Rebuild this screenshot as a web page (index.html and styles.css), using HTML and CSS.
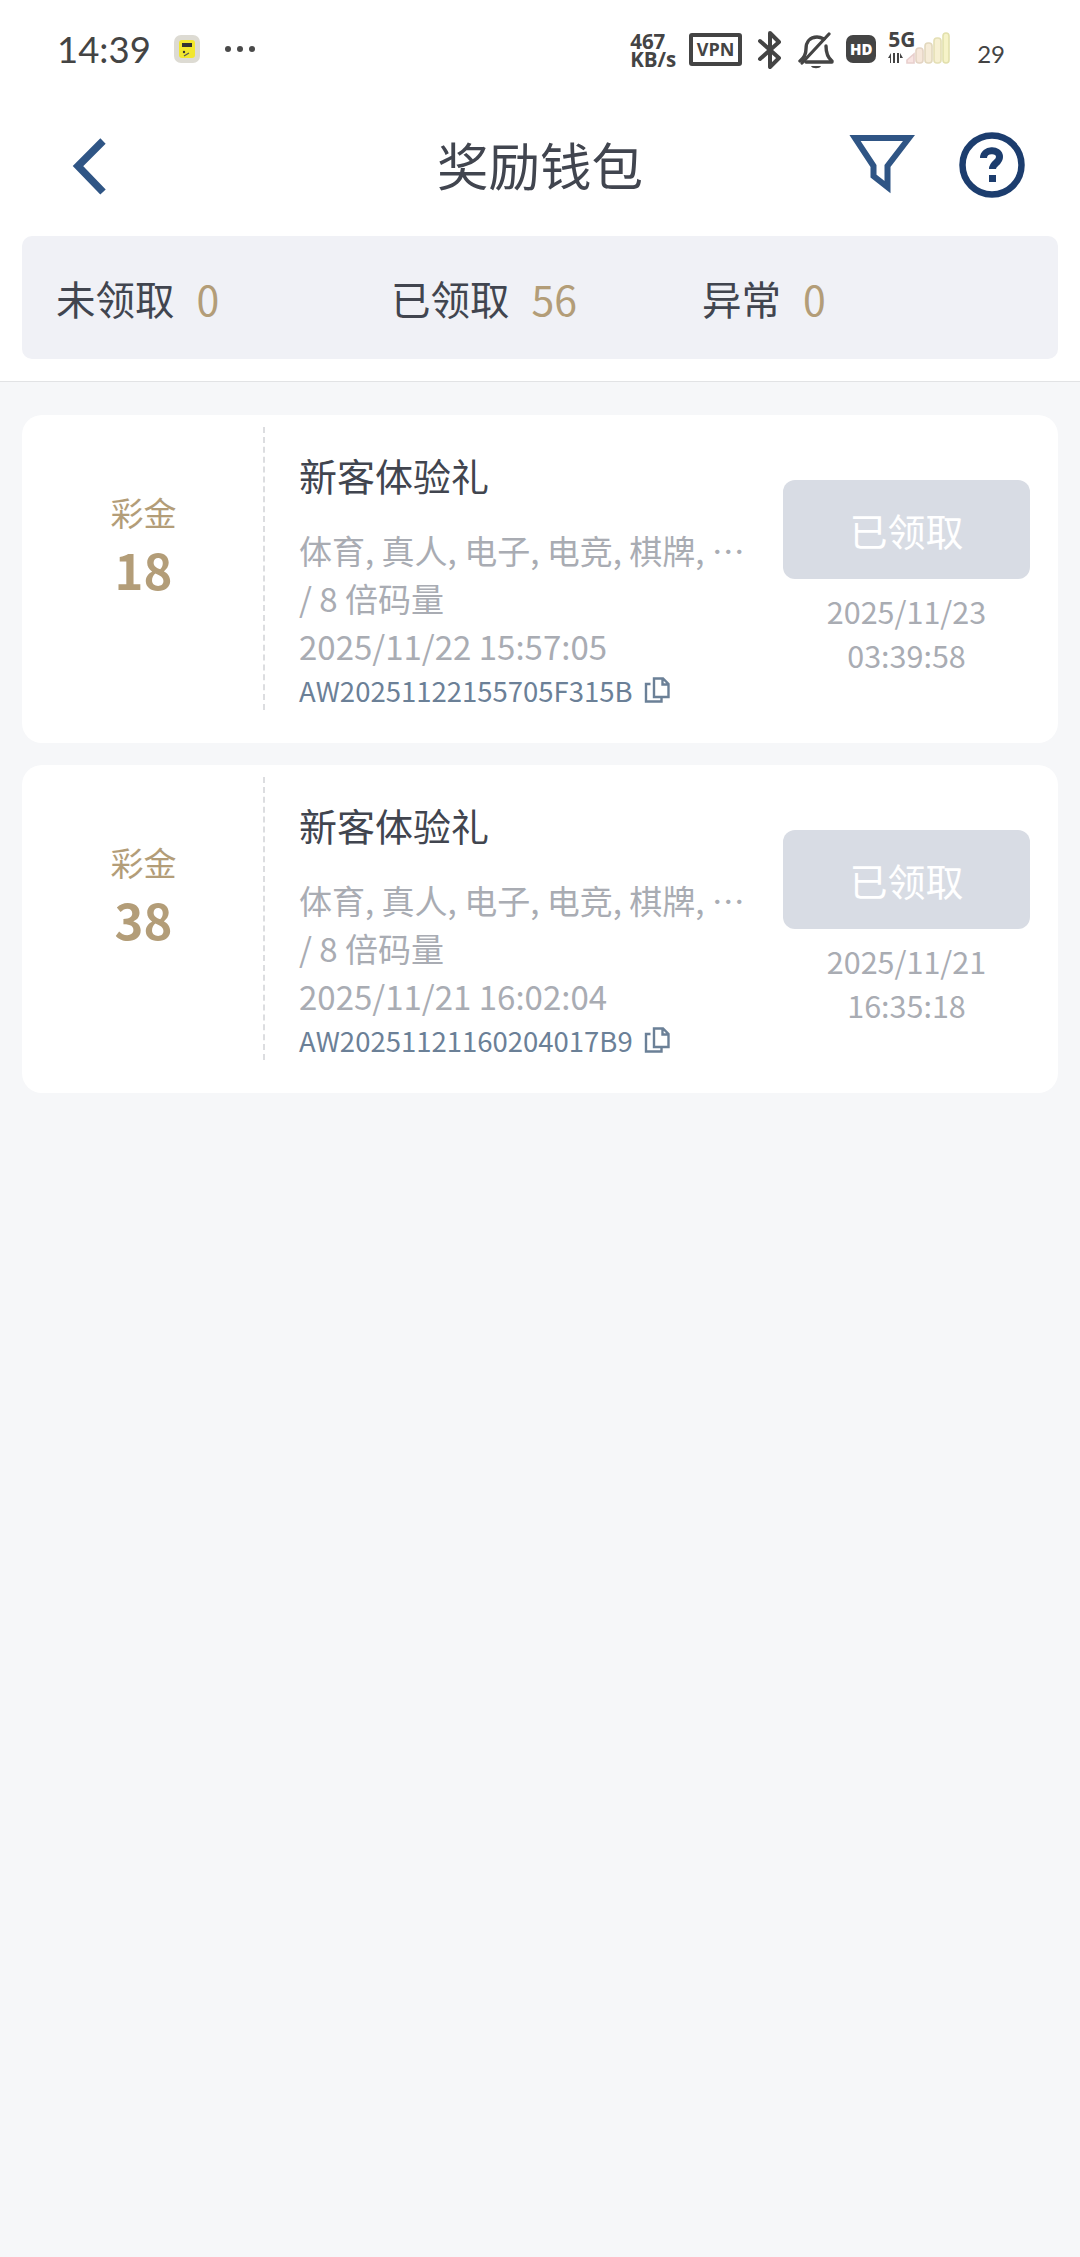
FILE: index.html
```html
<!DOCTYPE html>
<html lang="zh-CN">
<head>
<meta charset="utf-8">
<title>奖励钱包</title>
<link rel="stylesheet" href="styles.css">
</head>
<body>
<div class="top">
  <div class="status">
    <div class="status-left">
      <span class="clock">14:39</span>
      <svg class="app-icon" width="26" height="28" viewBox="0 0 26 28"><rect x="0" y="0" width="26" height="28" rx="7" fill="#dddbd3"/><rect x="5" y="5" width="16" height="18" rx="3" fill="#f2e72e"/><rect x="8" y="8" width="10" height="4" fill="#333"/><circle cx="10" cy="17" r="1.200" fill="#333"/><path d="M10 21l5-3" stroke="#555" stroke-width="1.200"/></svg>
      <svg class="dots" width="32" height="8" viewBox="0 0 32 8"><circle cx="4" cy="4" r="3" fill="#4a4a4a"/><circle cx="16" cy="4" r="3" fill="#4a4a4a"/><circle cx="28" cy="4" r="3" fill="#4a4a4a"/></svg>
    </div>
    <div class="status-right">
      <div class="speed">467<br>KB/s</div>
      <div class="vpn">VPN</div>
      <svg class="bt" width="26" height="40" viewBox="0 0 26 40"><path d="M3 11l19 17-9 9V3l9 9L3 29" fill="none" stroke="#444" stroke-width="4" stroke-linejoin="round" stroke-linecap="round"/></svg>
      <svg class="bell" width="36" height="38" viewBox="0 0 36 38"><path d="M2 29c4-3 6-6 6-12 0-7 4-12 11-12 3 0 5 1 7 2M28 14c0 7 2 12 6 15v1H8" fill="none" stroke="#444" stroke-width="3.400" stroke-linecap="round" stroke-linejoin="round"/><path d="M4 31L31 2" stroke="#444" stroke-width="3.200" stroke-linecap="round"/><path d="M13 34h10c-1 3-9 3-10 0z" fill="#444"/></svg>
      <div class="hd">HD</div>
      <div class="net">
        <div class="net-type">
          <span class="five-g">5G</span>
          <svg width="16" height="10" viewBox="0 0 16 10"><path d="M0 5l3-5v10H2V5zM5 0h2v10H5zM9 0h2v10H9zM12 0l3 5h-3z" fill="#444"/></svg>
        </div>
        <svg class="bars" width="44" height="32" viewBox="0 0 44 32"><g stroke-width="1.600"><path d="M1 31v-3l7-6v9z" fill="#f8e4e2" stroke="#e8cfcd"/><rect x="10" y="16" width="7" height="15" rx="3" fill="#f6e7da" stroke="#e4d4c4"/><rect x="19" y="11" width="7" height="20" rx="3" fill="#f6ecd8" stroke="#e2d8bd"/><rect x="28" y="6" width="7" height="25" rx="3" fill="#f7f0d2" stroke="#e4dfb5"/><rect x="37" y="1" width="6" height="30" rx="3" fill="#f6f3c8" stroke="#e2e0ad"/></g></svg>
      </div>
      <span class="battery">29</span>
    </div>
  </div>
  <header class="nav">
    <svg class="back" width="36" height="60" viewBox="0 0 36 60"><path d="M31 4L6 29l25 26" fill="none" stroke="#2f5585" stroke-width="7.500"/></svg>
    <h1 class="title">奖励钱包</h1>
    <div class="nav-actions">
      <svg class="filter" width="66" height="62" viewBox="0 0 66 62"><path d="M6 3H60L38.500 31V52L24.500 41V31Z" fill="none" stroke="#2f5585" stroke-width="6"/></svg>
      <svg class="help" width="66" height="66" viewBox="0 0 66 66"><circle cx="33" cy="33" r="29.500" fill="none" stroke="#1c3d6e" stroke-width="6.500"/><path d="M24.500 26c0-9 16-10 16-1 0 6-7 6-7 12" fill="none" stroke="#1c3d6e" stroke-width="7"/><rect x="30" y="43" width="7" height="7" fill="#1c3d6e"/></svg>
    </div>
  </header>
  <div class="summary">
    <div class="sum-item"><span>未领取</span><span class="sum-num">0</span></div>
    <div class="sum-item"><span>已领取</span><span class="sum-num">56</span></div>
    <div class="sum-item"><span>异常</span><span class="sum-num">0</span></div>
  </div>
</div>
<main class="list">
  <article class="card">
    <div class="amount">
      <div class="amount-label">彩金</div>
      <div class="amount-value">18</div>
    </div>
    <div class="info">
      <div class="info-title">新客体验礼</div>
      <div class="info-line">体育, 真人, 电子, 电竞, 棋牌, …</div>
      <div class="info-line">/ 8 倍码量</div>
      <div class="info-line">2025/11/22 15:57:05</div>
      <div class="info-id"><span>AW20251122155705F315B</span>
        <svg width="26" height="26" viewBox="0 0 26 26"><path d="M10 1.500h9l5.500 5.500v13H10zM18.500 1.500v6h6M6.500 7H2v17.500h15.500V20" fill="none" stroke="#6b8097" stroke-width="2.400"/></svg>
      </div>
    </div>
    <div class="side">
      <div class="btn">已领取</div>
      <div class="side-date">2025/11/23<br>03:39:58</div>
    </div>
  </article>
  <article class="card">
    <div class="amount">
      <div class="amount-label">彩金</div>
      <div class="amount-value">38</div>
    </div>
    <div class="info">
      <div class="info-title">新客体验礼</div>
      <div class="info-line">体育, 真人, 电子, 电竞, 棋牌, …</div>
      <div class="info-line">/ 8 倍码量</div>
      <div class="info-line">2025/11/21 16:02:04</div>
      <div class="info-id"><span>AW20251121160204017B9</span>
        <svg width="26" height="26" viewBox="0 0 26 26"><path d="M10 1.500h9l5.500 5.500v13H10zM18.500 1.500v6h6M6.500 7H2v17.500h15.500V20" fill="none" stroke="#6b8097" stroke-width="2.400"/></svg>
      </div>
    </div>
    <div class="side">
      <div class="btn">已领取</div>
      <div class="side-date">2025/11/21<br>16:35:18</div>
    </div>
  </article>
</main>
</body>
</html>
```
FILE: styles.css
```css
* { box-sizing: border-box; }
html, body { margin: 0; padding: 0; }
body {
  min-height: 100vh;
  background: #f6f7f9;
  font-family: "Noto Sans CJK SC", "Noto Sans", sans-serif;
  color: #41454f;
  overflow: hidden;
}
.top {
  background: #fff;
  height: 382px;
  padding-bottom: 22px;
  border-bottom: 1px solid #e2e3e5;
}
.status {
  height: 96px;
  padding: 25px 75px 0 57px;
  display: flex;
  justify-content: space-between;
  align-items: flex-start;
}
.status-left { display: flex; align-items: center; height: 48px; }
.clock { font: 36.500px/48px Lato, sans-serif; color: #444; width: 117px; }
.dots { margin-left: 24px; }
.status-right { display: flex; align-items: flex-start; height: 48px; }
.speed {
  font: 700 20.500px/18px "Open Sans", sans-serif;
  color: #444;
  width: 59px;
  margin-top: 7px;
}
.vpn {
  width: 53px; height: 33px; margin-top: 8px;
  border: 4px solid #444; border-radius: 3px;
  font: 700 18px/25px "Open Sans", sans-serif;
  text-align: center; color: #444;
}
.bt { margin: 5px 0 0 15px; }
.bell { margin: 7px 0 0 15px; }
.hd {
  width: 30px; height: 28px; margin: 10px 0 0 12px;
  background: #444; border-radius: 7px; color: #fff;
  font: 800 15px/28px "Open Sans", sans-serif;
  text-align: center;
}
.net { display: flex; margin: 5px 0 0 12px; align-items: flex-end; }
.net-type { display: flex; flex-direction: column; width: 18px; height: 34px; }
.five-g { font: 700 21px/19px "Open Sans", sans-serif; color: #444; width: 30px; margin-bottom: 4px; }
.battery { font: 24px/36px Lato, sans-serif; color: #444; margin: 11px 0 0 27px; }
.nav {
  height: 140px;
  position: relative;
  display: flex;
  align-items: center;
  justify-content: center;
  padding-bottom: 2px;
}
.back { position: absolute; left: 72px; top: 41px; }
.title { margin: -2px 0 0; font-size: 51.500px; font-weight: 400; line-height: 70px; color: #41454f; }
.nav-actions { position: absolute; right: 55px; top: 36px; display: flex; align-items: flex-start; gap: 44px; }
.filter { margin-top: 3px; }
.summary {
  margin: 0 22px;
  height: 123px;
  background: #f0f1f6;
  border-radius: 10px;
  display: grid;
  grid-template-columns: 335px 311px 1fr;
  padding-left: 34px;
  align-items: center;
  font-size: 39.500px;
}
.sum-item { display: flex; gap: 22px; align-items: center; }
.sum-num { color: #b39d78; font-size: 41px; }
.list { padding: 33px 22px 0; display: flex; flex-direction: column; gap: 22px; }
.card {
  height: 328px;
  background: #fff;
  border-radius: 20px;
  display: flex;
  padding: 12px 28px 33px 0;
}
.amount {
  width: 243px;
  border-right: 2px dashed #dcdde0;
  padding: 62px 0 0 2px;
  text-align: center;
}
.amount-label { font-size: 33px; line-height: 46px; color: #b39d78; }
.amount-value { font-size: 49px; line-height: 66px; font-weight: 700; color: #b39d78; margin-top: 1px; }
.info { flex: 1; padding: 24px 0 0 34px; min-width: 0; }
.info-title { font-size: 38px; line-height: 48px; margin-bottom: 27px; color: #41454f; }
.info-line { font-size: 33px; line-height: 48px; color: #a9acb3; white-space: nowrap; }
.info-id { display: flex; align-items: center; gap: 11px; height: 40px; font-size: 27.500px; color: #6b8097; }
.side { width: 247px; padding-top: 53px; text-align: center; }
.btn {
  height: 99px;
  background: #d8dce4;
  border-radius: 12px;
  color: #fff;
  font-size: 38px;
  line-height: 99px;
}
.side-date { margin-top: 10px; font-size: 30.500px; line-height: 44px; color: #a9acb3; }
```
